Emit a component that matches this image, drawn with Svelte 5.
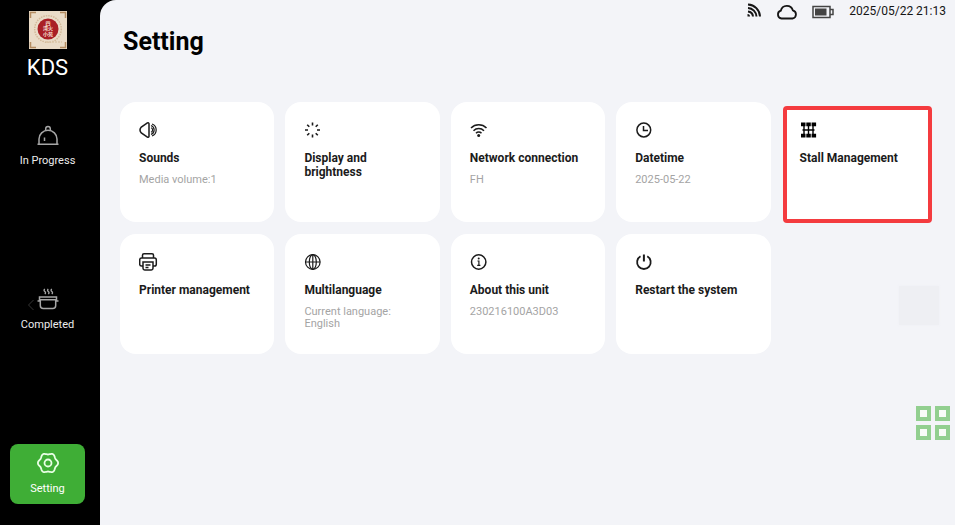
<script>
  const nav = [
    { id: 'progress', label: 'In Progress' },
    { id: 'completed', label: 'Completed' },
    { id: 'setting', label: 'Setting' }
  ];
  let active = $state('setting');

  // Outline of a soft cog with six lobes, centred in a 22-unit box.
  const cog = Array.from({ length: 72 }, (_, i) => {
    const a = (i * Math.PI) / 36;
    const r = 9.3 + 0.8 * Math.cos(6 * a);
    return `${(11 + r * Math.cos(a)).toFixed(2)},${(11 + r * Math.sin(a)).toFixed(2)}`;
  }).join(' ');

  const cards = [
    { icon: 'sound', title: 'Sounds', note: 'Media volume:1' },
    { icon: 'bright', title: 'Display and brightness' },
    { icon: 'wifi', title: 'Network connection', note: 'FH' },
    { icon: 'clock', title: 'Datetime', note: '2025-05-22' },
    { icon: 'stall', title: 'Stall Management', marked: true },
    { icon: 'printer', title: 'Printer management' },
    { icon: 'globe', title: 'Multilanguage', note: 'Current language: English' },
    { icon: 'info', title: 'About this unit', note: '230216100A3D03' },
    { icon: 'power', title: 'Restart the system' }
  ];
</script>

{#snippet cardIcon(name)}
  <svg class="icon" viewBox="0 0 20 20" aria-hidden="true">
    {#if name === 'sound'}
      <path d="M10 3.800v12.400c0 1-.8 1.400-1.600.9L2.300 12.900q-2.600-2.900 0-5.800l6.100-4.200c.8-.5 1.600-.1 1.600.9z" />
      <path d="M12 7.800a2.300 2.300 0 0 1 0 4.400" stroke-width="1.200" />
      <path d="M12 5.500a4.800 4.800 0 0 1 0 9" stroke-width="1.200" />
      <path d="M13 4a6.400 6.400 0 0 1 0 12" stroke-width="1.200" />
    {:else if name === 'bright'}
      <path d="M8.500 2.500v3M8.500 14.500v3M1 10h3M13 10h3M3.200 4.700l2.100 2.100M11.700 13.200l2.100 2.100M3.200 15.300l2.100-2.100M11.700 6.800l2.100-2.100" stroke-width="1.600" />
    {:else if name === 'wifi'}
      <path d="M1 8a11 11 0 0 1 15.500 0M3.500 10.700a7.400 7.400 0 0 1 10.500 0M6 13.200a3.700 3.700 0 0 1 5.500 0" stroke-width="1.500" />
      <circle cx="8.700" cy="15.400" r="1.500" fill="currentColor" stroke="none" />
    {:else if name === 'clock'}
      <circle cx="8.800" cy="10" r="6.900" /><path d="M8.500 6v4.500H13" />
    {:else if name === 'stall'}
      <path d="M4 4v12M8.500 4v12M13 4v12M2.500 10h12" stroke-width="1.400" />
      <path d="M1 2.500h4.500v3.800H1zM6.300 2.500h4.500v3.800H6.300zM11.600 2.500h4.500v3.800h-4.500zM1 13.700h4.500v3.800H1zM6.300 13.700h4.500v3.800H6.300zM11.600 13.700h4.500v3.800h-4.500z" fill="currentColor" stroke="none" />
    {:else if name === 'printer'}
      <path d="M3.500 6V3.200q0-1.500 1.500-1.500h8q1.500 0 1.500 1.500V6M4 14H2.500q-1.800 0-1.800-1.800V8q0-2 1.800-2h13q1.800 0 1.800 2v4.200q0 1.800-1.800 1.800H14" />
      <path d="M4 10h10v6.300q0 1.700-1.700 1.700H5.700Q4 18 4 16.300zM6.500 13h5M6.500 15.500h3" />
    {:else if name === 'globe'}
      <g stroke-width="1.200"><circle cx="8.800" cy="10" r="7.300" /><ellipse cx="8.800" cy="10" rx="3.500" ry="7.300" /><path d="M1.500 10h14.600M8.800 2.700v14.600" /></g>
    {:else if name === 'info'}
      <circle cx="8.700" cy="10" r="7.200" /><path d="M7.500 9h1.400v4.500M7.200 13.400h3.200" stroke-width="1.200" /><circle cx="8.700" cy="6.500" r="1" fill="currentColor" stroke="none" />
    {:else}
      <path d="M5.500 4.300a6.800 6.800 0 1 0 6.800 0" stroke-width="1.800" /><path d="M8.900 2.500v7" stroke-width="2" />
    {/if}
  </svg>
{/snippet}

<div class="app">
  <aside>
    <svg class="logo" viewBox="0 0 38 38" role="img" aria-label="Restaurant logo">
      <rect width="38" height="38" fill="#eadcc8" />
      <path d="M1.500 7V1.500H7M31 1.500h5.500V7M36.500 31v5.500H31M7 36.500H1.500V31" fill="none" stroke="#b58d62" />
      <circle cx="19" cy="18" r="13.300" fill="none" stroke="#d3ba9a" stroke-width="1.500" stroke-dasharray="1.500 1" />
      <circle cx="19" cy="18" r="10.500" fill="#a91f25" />
      <g fill="#f5dfd2" font-size="5" font-weight="700" text-anchor="middle">
        <text x="19" y="13.500">四</text><text x="19" y="18.800">湾火</text><text x="19" y="24.500">小苑</text>
      </g>
      <path d="M17 31h16" stroke="#dcc6a8" stroke-dasharray="2 1" />
    </svg>
    <div class="brand">KDS</div>
    <nav>
      {#each nav as item (item.id)}
        <button class="nav-item" class:active={active === item.id} onclick={() => (active = item.id)}>
          <svg class="nav-icon" viewBox="0 0 22 22" aria-hidden="true">
            {#if item.id === 'progress'}
              <path d="M.5 20.200h21M2 20v-5a9 8.700 0 0 1 18 0v5M7.500 13.500V17" /><path d="M8.700 6.500V4.700a2.300 2.300 0 0 1 4.600 0v1.800" />
            {:else if item.id === 'completed'}
              <path d="M3.300 12v5.500q0 3 3 3h9.400q3 0 3-3V12M2.500 9h17v2.800h-17zM.5 13h2.800M18.700 13h2.800" /><path d="M7.800 1q-1.500 1.300 0 2.500t0 2.500M11.300 1q-1.500 1.300 0 2.500t0 2.500M14.800 1q-1.500 1.300 0 2.500t0 2.500" stroke-width="1.300" />
            {:else}
              <polygon points={cog} /><circle cx="11" cy="11" r="3.500" />
            {/if}
          </svg>
          <span>{item.label}</span>
          {#if item.id === 'completed'}
            <svg class="back" viewBox="0 0 8 12" aria-hidden="true"><path d="M6.500 1 1.500 6l5 5" /></svg>
          {/if}
        </button>
      {/each}
    </nav>
  </aside>

  <main>
    <div class="status">
      <svg class="cast" viewBox="0 0 16 16" aria-hidden="true"><path d="M2 2.500A12.500 12.500 0 0 1 14 14.500M2 6a9 9 0 0 1 8.500 8.500M2 9.500a5.500 5.500 0 0 1 5 5" /><path d="M1.500 12q2.500 0 2.500 2.500H1.500z" fill="currentColor" stroke="none" /></svg>
      <svg class="cloud" viewBox="0 0 22 16" aria-hidden="true"><path d="M5.500 14.500a4 4 0 0 1-.7-7.800 6.200 6.200 0 0 1 12-.4 4.200 4.200 0 0 1-.3 8.200z" /></svg>
      <svg class="battery" viewBox="0 0 22 14" aria-hidden="true"><path d="M1 1.500h17v11H1zM18.500 4.500h2.500v5h-2.500" /><path d="M3 3.500h11.500v7H3z" fill="currentColor" stroke="none" /></svg>
      <time datetime="2025-05-22T21:13">2025/05/22 21:13</time>
    </div>
    <h1>Setting</h1>
    <div class="grid">
      {#each cards as card (card.title)}
        <button class="card" class:marked={card.marked}>
          {@render cardIcon(card.icon)}
          <span class="title">{card.title}</span>
          {#if card.note}<span class="note">{card.note}</span>{/if}
        </button>
      {/each}
    </div>
    <div class="ghost"></div>
    <button class="apps" aria-label="All apps">
      <i></i><i></i><i></i><i></i>
    </button>
  </main>
</div>

<style>
  :global(body) {
    background: #000;
  }
  .app {
    display: flex;
    min-height: 100vh;
    background: #000;
    font-family: Roboto, 'Noto Sans CJK SC', sans-serif;
  }
  button {
    border: 0;
    margin: 0;
    font-family: inherit;
    cursor: pointer;
  }
  svg {
    display: block;
    flex: none;
    fill: none;
    stroke: currentColor;
    stroke-width: 1.5;
  }
  aside {
    box-sizing: border-box;
    flex: 0 0 100px;
    display: flex;
    flex-direction: column;
    align-items: center;
    padding: 11px 15px 21px 10px;
    color: #fff;
  }
  .logo {
    width: 38px;
    height: 38px;
    stroke: none;
  }
  .brand {
    margin-top: 6px;
    font-size: 22px;
    line-height: 26px;
  }
  nav {
    flex: 1;
    align-self: stretch;
    display: flex;
    flex-direction: column;
    justify-content: space-between;
    gap: 24px;
    margin-top: 35px;
  }
  .nav-item {
    position: relative;
    display: flex;
    flex-direction: column;
    align-items: center;
    gap: 8px;
    height: 60px;
    padding: 8px 0 0;
    border-radius: 8px;
    background: none;
    color: #ececec;
    font-size: 11px;
    line-height: 14px;
  }
  .nav-item.active {
    background: #3fae36;
    color: #fff;
  }
  .nav-icon {
    width: 22px;
    height: 22px;
    color: #a6a6a6;
  }
  .active .nav-icon {
    color: #e9ffe6;
    stroke-width: 1.8;
  }
  .back {
    position: absolute;
    left: 17px;
    top: 19px;
    width: 8px;
    height: 12px;
    color: #363636;
    stroke-width: 1;
  }
  main {
    position: relative;
    flex: 1;
    min-width: 0;
    padding: 0 19px 20px 20px;
    border-top-left-radius: 16px;
    background: #f3f4f8;
    color: #151515;
  }
  .status {
    display: flex;
    justify-content: flex-end;
    align-items: center;
    height: 24px;
    margin-right: -10px;
    font-size: 12px;
    line-height: 22px;
  }
  .status time {
    padding-bottom: 2px;
  }
  .cast {
    width: 16px;
    height: 16px;
    margin: 0 14px 4px 0;
    stroke-width: 2;
  }
  .cloud {
    width: 22px;
    height: 16px;
    margin-right: 14px;
    stroke-width: 1.8;
  }
  .battery {
    width: 22px;
    height: 14px;
    margin-right: 15px;
    color: #444;
  }
  h1 {
    margin: 2px 0 0 3px;
    font-size: 25px;
    line-height: 32px;
    color: #000;
  }
  .grid {
    display: grid;
    grid-template-columns: repeat(5, minmax(0, 1fr));
    grid-auto-rows: minmax(120px, auto);
    gap: 12px 11px;
    margin-top: 44px;
  }
  .card {
    display: flex;
    flex-direction: column;
    align-items: flex-start;
    padding: 18px 18px 10px 19px;
    border-radius: 16px;
    background: #fff;
    color: #1b1b1b;
    text-align: left;
  }
  .marked {
    margin: 4px 4px -1px 1px;
    padding: 10px 12px 10px 13px;
    border: 4px solid #f43b3f;
    border-radius: 4px;
  }
  .icon {
    width: 20px;
    height: 20px;
  }
  .marked .icon {
    color: #000;
  }
  .title {
    margin-top: 11px;
    font-size: 12px;
    font-weight: 700;
    line-height: 14px;
  }
  .note {
    margin-top: 9px;
    font-size: 11px;
    line-height: 12px;
    color: #a4a4a4;
  }
  .ghost {
    position: absolute;
    right: 16px;
    top: 286px;
    width: 40px;
    height: 39px;
    background: #eeeff3;
    box-shadow: 0 0 3px #eff0f4;
  }
  .apps {
    position: absolute;
    right: 5px;
    top: 406px;
    display: grid;
    grid-template-columns: 15px 15px;
    gap: 4px;
    padding: 0;
    background: none;
  }
  .apps i {
    box-sizing: border-box;
    width: 15px;
    height: 15px;
    border: 4px solid #92cf90;
    background: #f8fbf8;
  }
</style>
